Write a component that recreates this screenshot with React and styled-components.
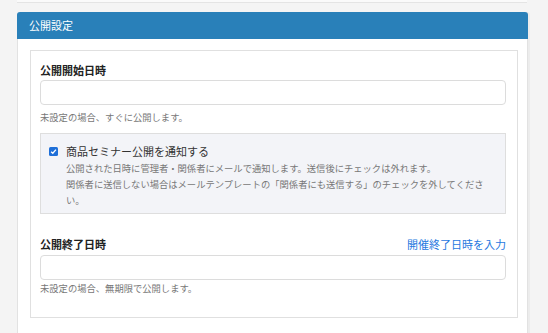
import React from "react";
import styled, { createGlobalStyle } from "styled-components";

const GlobalStyle = createGlobalStyle`
  body {
    margin: 0;
    background: #f4f4f4;
    font-family: "Noto Sans CJK JP", "Noto Sans", sans-serif;
  }
`;

const Page = styled.div`
  width: 548px;
  height: 333px;
  overflow: hidden;
  padding-left: 17px;
  box-sizing: border-box;
`;

const TopEdge = styled.div`
  width: 510px;
  height: 2px;
  background: #fafafa;
  border-bottom: 1px solid #e4e4e4;
  margin-bottom: 9px;
`;

const Panel = styled.section`
  width: 509px;
  background: #fff;
  border: 1px solid #e2e2e2;
  border-top: none;
  border-radius: 3px 3px 0 0;
  box-shadow: 2px 0 0 #ececec;
`;

const PanelHeader = styled.div`
  height: 27px;
  margin: 0 -1px;
  padding-left: 12px;
  background: #2980b9;
  border-radius: 3px 3px 0 0;
  color: #fff;
  font-size: 11px;
  line-height: 27px;
`;

const PanelBody = styled.div`
  padding: 11px 9px 20px 12px;
`;

const Card = styled.div`
  border: 1px solid #e0e0e0;
  padding: 11px 11px 22px 9px;
`;

const LabelRow = styled.div`
  display: flex;
  justify-content: space-between;
  align-items: center;
  height: 16px;
  margin-top: ${(p) => p.$top || 0}px;
  margin-bottom: ${(p) => p.$gap}px;
`;

const Label = styled.label`
  font-size: 11px;
  font-weight: 700;
  color: #222;
`;

const Link = styled.a`
  font-size: 11px;
  color: #1f78e0;
  text-decoration: none;
`;

const Input = styled.input`
  display: block;
  width: 100%;
  height: 25px;
  box-sizing: border-box;
  border: 1px solid #dcdcdc;
  border-radius: 4px;
  background: #fff;
`;

const Help = styled.p`
  margin: ${(p) => p.$top}px 0 0;
  font-size: 9.3px;
  line-height: 14px;
  color: #777;
`;

const NoticeBox = styled.div`
  display: flex;
  gap: 8px;
  margin-top: 9px;
  padding: 8px 12px 5px 8px;
  background: #f3f4f8;
  border: 1px solid #dedede;
`;

const Check = styled.span`
  flex: none;
  width: 9px;
  height: 9px;
  margin-top: 5px;
  border-radius: 1.5px;
  background: #1f6fd8;
  display: flex;
  align-items: center;
  justify-content: center;
`;

const NoticeText = styled.div`
  flex: 1;
`;

const NoticeTitle = styled.div`
  font-size: 11px;
  line-height: 18px;
  color: #333;
`;

const NoticeNote = styled.p`
  margin: 0;
  font-size: 9.3px;
  line-height: 16px;
  color: #777;
`;

export default function App() {
  return (
    <Page>
      <GlobalStyle />
      <TopEdge />
      <Panel>
        <PanelHeader>公開設定</PanelHeader>
        <PanelBody>
          <Card>
            <LabelRow $gap={2}>
              <Label>公開開始日時</Label>
            </LabelRow>
            <Input />
            <Help $top={5}>未設定の場合、すぐに公開します。</Help>

            <NoticeBox>
              <Check>
                <svg width="7" height="7" viewBox="0 0 8 8">
                  <path d="M1.3 4.2 3.2 6 6.8 1.8" fill="none" stroke="#fff" strokeWidth="1.5" />
                </svg>
              </Check>
              <NoticeText>
                <NoticeTitle>商品セミナー公開を通知する</NoticeTitle>
                <NoticeNote>公開された日時に管理者・関係者にメールで通知します。送信後にチェックは外れます。</NoticeNote>
                <NoticeNote>関係者に送信しない場合はメールテンプレートの「関係者にも送信する」のチェックを外してください。</NoticeNote>
              </NoticeText>
            </NoticeBox>

            <LabelRow $top={22} $gap={3}>
              <Label>公開終了日時</Label>
              <Link href="#">開催終了日時を入力</Link>
            </LabelRow>
            <Input />
            <Help $top={1}>未設定の場合、無期限で公開します。</Help>
          </Card>
        </PanelBody>
      </Panel>
    </Page>
  );
}
